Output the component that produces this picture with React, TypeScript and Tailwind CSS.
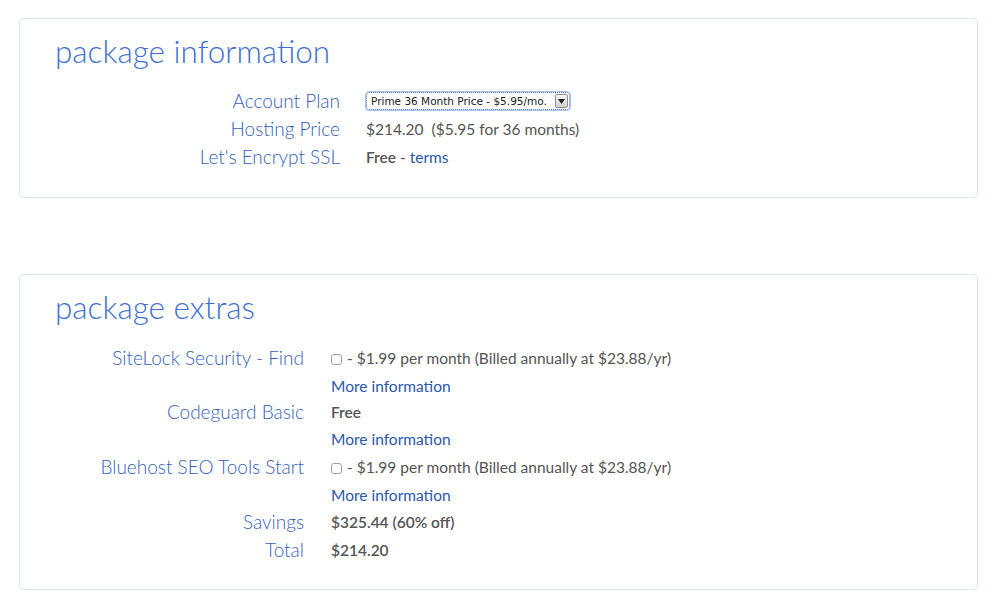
import React from "react";

const Checkbox = () => (
  <span className="inline-block w-[11px] h-[11px] border border-[#a0a0a0] rounded-[3px] bg-white align-middle mr-[5px] relative top-[-1px]" />
);

const labelCls = "shrink-0 text-right text-[19px] font-light text-[#3262bf] leading-[28px] whitespace-nowrap";
const linkCls = "text-[#2a57b0]";

export default function App() {
  return (
    <div className="min-h-[615px] bg-white pt-[18px] px-[19px] font-['Lato',sans-serif]">
      <div className="w-[959px] h-[180px] border border-[#d7e6f5] rounded-[5px] pt-[12px] pl-[35px]">
        <h2 className="text-[31.5px] font-light text-[#3d6fd6] leading-[40px]">package information</h2>
        <div className="mt-[16px]">
          <div className="flex items-center h-[28px]">
            <div className={`w-[285px] ${labelCls}`}>Account Plan</div>
            <div className="w-[26px] shrink-0" />
            <div className="flex items-center h-[18px] w-[204px] border border-dotted border-[#3b6fd0] rounded-[3px] bg-white font-['DejaVu_Sans',sans-serif] text-[10.5px] text-[#222] outline outline-1 outline-[#a9c2ea]">
              <span className="flex-1 pl-[4px] whitespace-nowrap leading-[16px] overflow-hidden">Prime 36 Month Price - $5.95/mo.</span>
              <span className="w-[13px] h-[14px] mr-[1px] bg-gradient-to-b from-[#f6f6f6] to-[#d0d0d0] border border-[#8f8f8f] rounded-[2px] flex items-center justify-center">
                <svg width="7" height="5" viewBox="0 0 7 5"><path d="M0 0h7L3.5 5z" fill="#222" /></svg>
              </span>
            </div>
          </div>
          <div className="flex items-center h-[28px]">
            <div className={`w-[285px] ${labelCls}`}>Hosting Price</div>
            <div className="w-[26px] shrink-0" />
            <div className="text-[15.5px] text-[#555] leading-[28px] whitespace-pre">$214.20  ($5.95 for 36 months)</div>
          </div>
          <div className="flex items-center h-[28px]">
            <div className={`w-[285px] ${labelCls}`}>Let's Encrypt SSL</div>
            <div className="w-[26px] shrink-0" />
            <div className="text-[15.5px] text-[#555] leading-[28px]">
              <span className="font-semibold">Free</span> - <span className={linkCls}>terms</span>
            </div>
          </div>
        </div>
      </div>

      <div className="mt-[76px] w-[959px] h-[316px] border border-[#d7e6f5] rounded-[5px] pt-[12px] pl-[35px]">
        <h2 className="text-[31.5px] font-light text-[#3d6fd6] leading-[40px]">package extras</h2>
        <div className="mt-[17px]">
          <Row2 label="SiteLock Security - Find">
            <Checkbox />- $1.99 per month (Billed annually at $23.88/yr)
          </Row2>
          <Row2 label="" h="h-[27px]">
            <span className={linkCls}>More information</span>
          </Row2>
          <Row2 label="Codeguard Basic" h="h-[25px]">
            <span className="font-semibold">Free</span>
          </Row2>
          <Row2 label="" h="h-[29px]">
            <span className={linkCls}>More information</span>
          </Row2>
          <Row2 label="Bluehost SEO Tools Start">
            <Checkbox />- $1.99 per month (Billed annually at $23.88/yr)
          </Row2>
          <Row2 label="" h="h-[27px]">
            <span className={linkCls}>More information</span>
          </Row2>
          <Row2 label="Savings">
            <span className="font-semibold">$325.44 (60% off)</span>
          </Row2>
          <Row2 label="Total">
            <span className="font-semibold">$214.20</span>
          </Row2>
        </div>
      </div>
    </div>
  );
}

function Row2({ label, children, h = "h-[28px]" }: { label: string; children: React.ReactNode; h?: string }) {
  return (
    <div className={`flex items-center ${h}`}>
      <div className={`w-[249px] ${labelCls}`}>{label}</div>
      <div className="w-[27px] shrink-0" />
      <div className="text-[15.5px] text-[#555] leading-[28px] whitespace-nowrap">{children}</div>
    </div>
  );
}
